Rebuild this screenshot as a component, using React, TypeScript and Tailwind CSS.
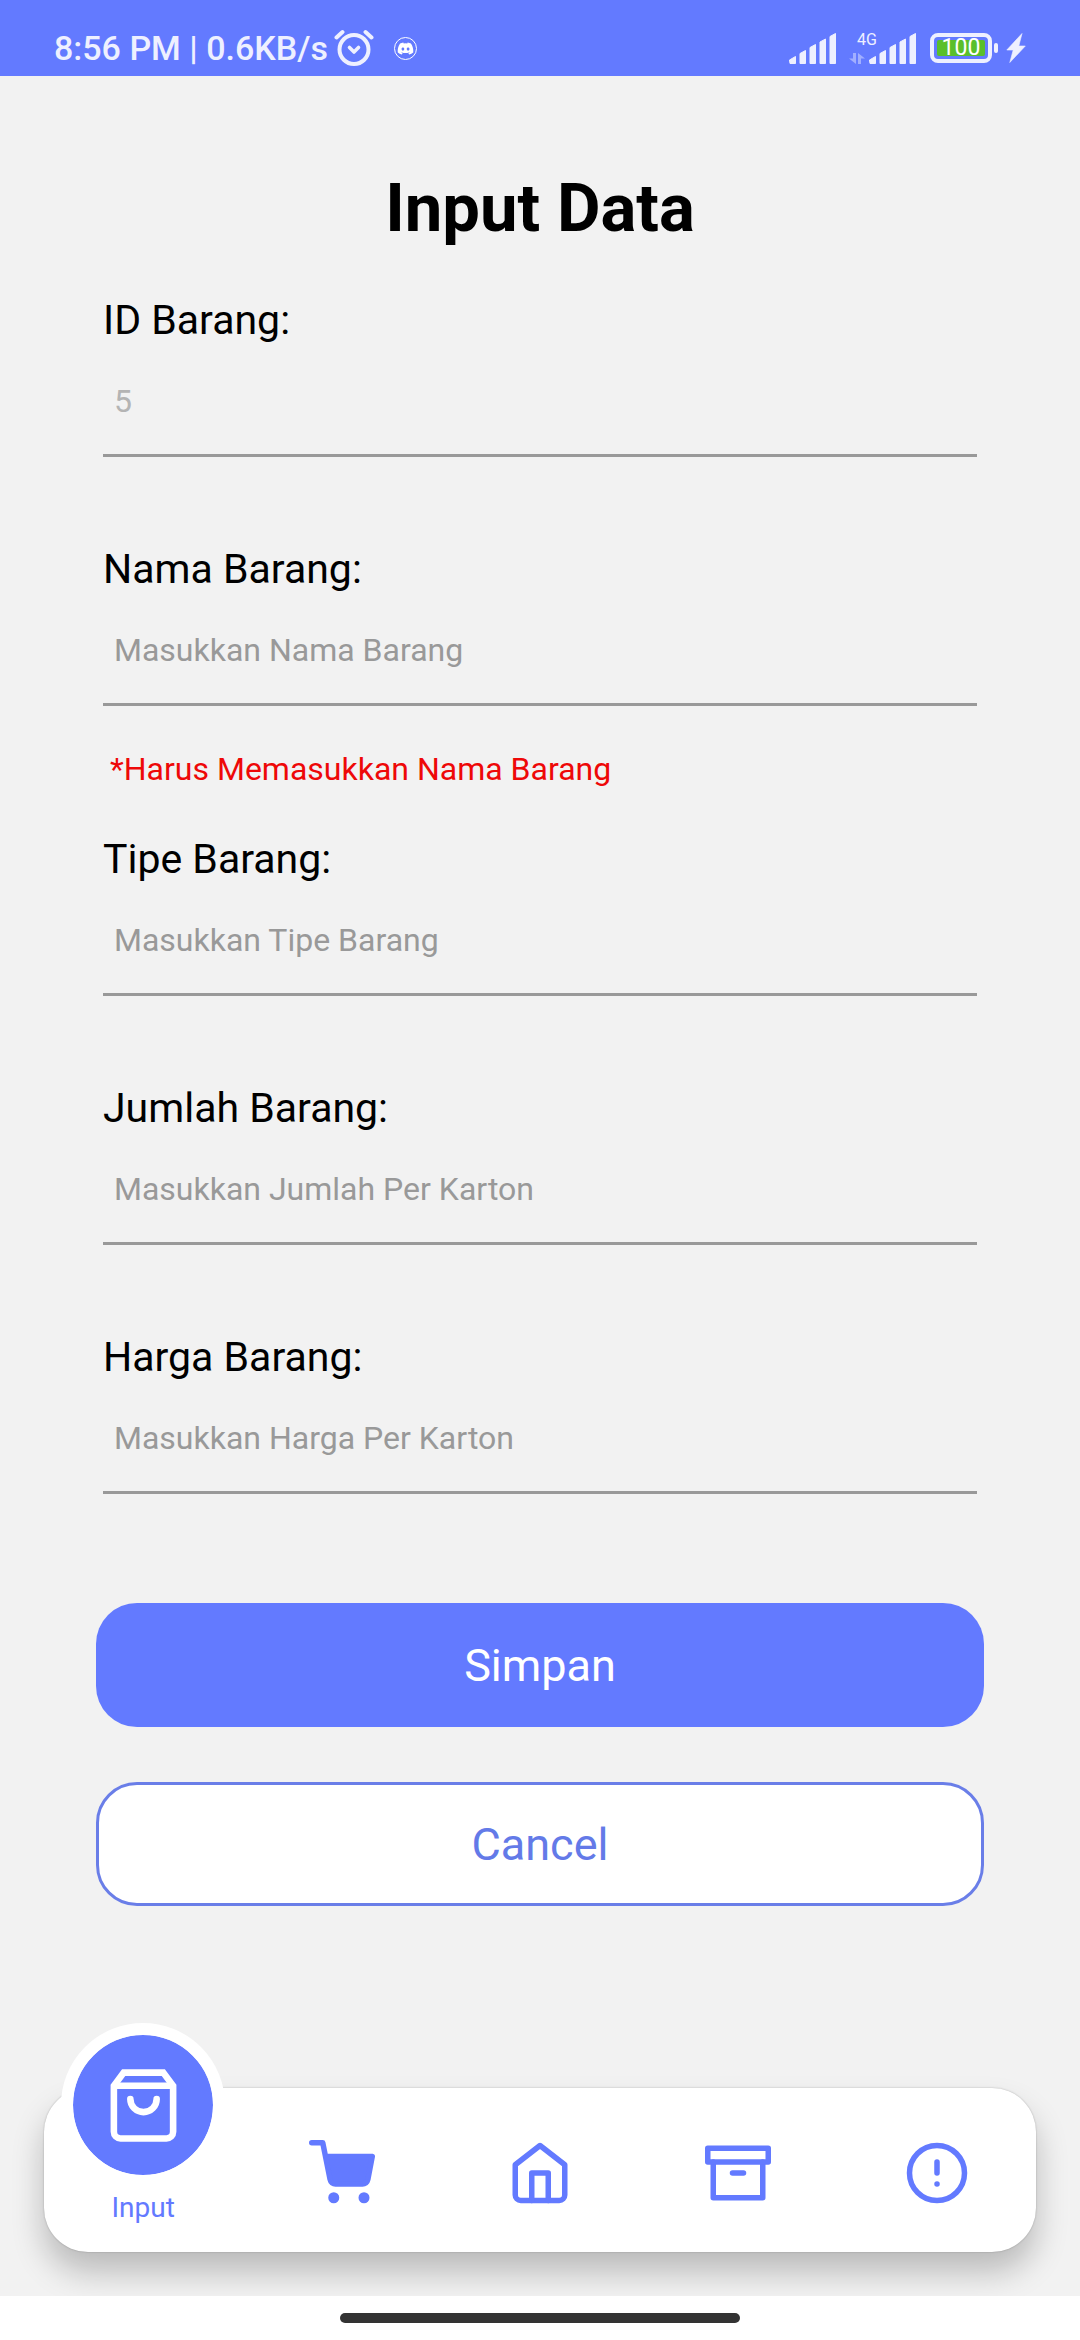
import type { ReactNode } from "react";
import { FaDiscord } from "react-icons/fa";

type FieldProps = {
  id: string;
  label: string;
  placeholder?: string;
  value?: string;
  error?: string;
};

function Field({ id, label, placeholder, value, error }: FieldProps) {
  return (
    <div>
      <label htmlFor={id} className="block text-[41px] leading-[52px] text-black">
        {label}
      </label>
      <input
        id={id}
        type="text"
        placeholder={placeholder}
        defaultValue={value}
        disabled={value !== undefined}
        className="block h-[111px] w-full border-b-3 border-[#999999] bg-transparent px-[11px] pt-[2px] text-[32px] text-black outline-none placeholder:text-[#999999] disabled:text-[#b4b4b4]"
      />
      <div className="px-[7px] py-[43px]">
        {error && (
          <p role="alert" className="text-[32px] leading-[41px] text-[#ee0808]">
            {error}
          </p>
        )}
      </div>
    </div>
  );
}

function AlarmIcon() {
  return (
    <svg width="40" height="38" viewBox="0 0 40 38" fill="none" stroke="currentColor" strokeWidth="4" strokeLinecap="round" strokeLinejoin="round" aria-hidden="true">
      <circle cx="20" cy="20.5" r="14.5" />
      <path d="M15.500 18.500l4.500 4.500 4.500-4.500" strokeWidth="3.6" />
      <path d="M2.500 8.500L8.500 3M37.500 8.500L31.500 3" />
    </svg>
  );
}

function DiscordIcon() {
  return (
    <span className="flex size-[23px] items-center justify-center rounded-full border border-white text-white">
      <FaDiscord size={17} aria-hidden="true" />
    </span>
  );
}

function SignalIcon() {
  return (
    <svg width="48" height="31" viewBox="0 0 48 31" fill="currentColor" stroke="currentColor" strokeWidth="1" strokeLinejoin="round" aria-hidden="true">
      <path d="M.5 27l6-3.500V30.500H1z" />
      <path d="M11 20.500l5.500-3V30.500H11z" />
      <path d="M21 14.500l5.500-3V30.500H21z" />
      <path d="M31 9l5.500-3V30.500H31z" />
      <path d="M41 3.500l5.500-3V30.500H41z" />
    </svg>
  );
}

function DataArrowsIcon() {
  return (
    <svg width="16" height="11" viewBox="0 0 16 11" fill="currentColor" opacity="0.45" aria-hidden="true">
      <path d="M4 0h3v11L0 5.500h4z" />
      <path d="M12 11H9V0L16 5.500h-4z" />
    </svg>
  );
}

function BoltIcon() {
  return (
    <svg width="20" height="30" viewBox="0 0 20 30" fill="currentColor" stroke="currentColor" strokeWidth="0.6" aria-hidden="true">
      <path d="M16 .5L.8 17h6.400L3.800 29.500 19.300 13h-6.500z" />
    </svg>
  );
}

function StatusBar() {
  return (
    <header className="flex h-19 items-center justify-between bg-[#637aff] px-[54px] pt-5 text-[#eef0ff]">
      <div className="flex items-center">
        <span className="text-[34px] leading-10 font-medium whitespace-nowrap">8:56 PM | 0.6KB/s</span>
        <span className="ml-[6px]">
          <AlarmIcon />
        </span>
        <span className="ml-5">
          <DiscordIcon />
        </span>
      </div>
      <div className="flex items-center">
        <SignalIcon />
        <div className="ml-3 flex h-8 flex-col items-start justify-between">
          <span className="pl-2 text-base leading-4">4G</span>
          <DataArrowsIcon />
        </div>
        <span className="-ml-2">
          <SignalIcon />
        </span>
        <span className="ml-[13px] flex h-[30px] w-[62px] items-center rounded-lg border-4 border-current p-[3px]">
          <span className="flex h-4 w-full items-center justify-center rounded-xs bg-[#5abf2b] text-[23px] leading-4 text-white">
            100
          </span>
        </span>
        <span className="ml-[2px] h-[10px] w-1 rounded-sm bg-current" />
        <span className="ml-2">
          <BoltIcon />
        </span>
      </div>
    </header>
  );
}

function NavIcon({ children }: { children: ReactNode }) {
  return (
    <svg width="66" height="66" viewBox="0 0 24 24" fill="none" stroke="currentColor" strokeWidth="2" strokeLinecap="round" strokeLinejoin="round" aria-hidden="true">
      {children}
    </svg>
  );
}

function NavLink({ label, children }: { label: string; children: ReactNode }) {
  return (
    <a href="#" aria-label={label} className="flex items-center justify-center pt-[6px]">
      <NavIcon>{children}</NavIcon>
    </a>
  );
}

function BottomNav() {
  return (
    <nav className="mx-11 mt-auto mb-11 grid h-41 grid-cols-5 rounded-[44px] bg-white text-[#637aff] shadow-[0_20px_32px_rgba(0,0,0,0.23),0_0_2px_rgba(0,0,0,0.25)]">
      <a href="#" aria-current="page" className="-mt-[65px] flex flex-col items-center">
        <span className="flex size-41 items-center justify-center rounded-full border-12 border-white bg-[#637aff] bg-clip-padding text-white">
          <svg width="79" height="79" viewBox="0 0 24 24" fill="none" stroke="currentColor" strokeWidth="2" aria-hidden="true">
            <path d="M6 2L3 6v14a2 2 0 0 0 2 2h14a2 2 0 0 0 2-2V6l-3-4z" />
            <path d="M3 6h18" />
            <path d="M16 10a4 4 0 0 1-8 0" strokeLinecap="round" />
          </svg>
        </span>
        <span className="mt-[5px] text-[28px] leading-8">Input</span>
      </a>
      <NavLink label="Keranjang">
        <circle cx="9" cy="21" r="1" fill="currentColor" />
        <circle cx="20" cy="21" r="1" fill="currentColor" />
        <path d="M6 6l1.680 8.390a2 2 0 0 0 2 1.610h9.720a2 2 0 0 0 2-1.610L23 6z" fill="currentColor" stroke="none" />
        <path d="M1 1h4l2.680 13.390a2 2 0 0 0 2 1.610h9.720a2 2 0 0 0 2-1.610L23 6H6" />
      </NavLink>
      <NavLink label="Beranda">
        <path d="M3 9l9-7 9 7v11a2 2 0 0 1-2 2H5a2 2 0 0 1-2-2z" />
        <path d="M9 22V12h6v10" />
      </NavLink>
      <NavLink label="Arsip">
        <path d="M21 8v13H3V8" />
        <path d="M1 3h22v5H1z" />
        <path d="M10 12h4" />
      </NavLink>
      <NavLink label="Info">
        <circle cx="12" cy="12" r="10" />
        <path d="M12 8v4M12 16h.01" />
      </NavLink>
    </nav>
  );
}

export default function App() {
  return (
    <div className="flex min-h-screen flex-col bg-white font-[Roboto,sans-serif]">
      <StatusBar />
      <main className="flex flex-1 flex-col overflow-hidden bg-[#f2f2f2] pt-[92px]">
        <h1 className="text-center text-[67px] leading-20 font-bold text-black">Input Data</h1>
        <form onSubmit={(event) => event.preventDefault()}>
          <div className="mt-[46px] px-[103px]">
            <Field id="id-barang" label="ID Barang:" value="5" />
            <Field
              id="nama-barang"
              label="Nama Barang:"
              placeholder="Masukkan Nama Barang"
              error="*Harus Memasukkan Nama Barang"
            />
            <Field id="tipe-barang" label="Tipe Barang:" placeholder="Masukkan Tipe Barang" />
            <Field id="jumlah-barang" label="Jumlah Barang:" placeholder="Masukkan Jumlah Per Karton" />
            <Field id="harga-barang" label="Harga Barang:" placeholder="Masukkan Harga Per Karton" />
          </div>
          <div className="mt-[23px] flex flex-col gap-[55px] px-24">
            <button type="submit" className="h-31 rounded-[41px] bg-[#637aff] pt-[2px] text-[45px] text-white">
              Simpan
            </button>
            <button
              type="button"
              className="h-31 rounded-[41px] border-3 border-[#6a7ee8] bg-white pt-[2px] text-[45px] text-[#637ae8]"
            >
              Cancel
            </button>
          </div>
        </form>
        <BottomNav />
      </main>
      <footer className="flex h-11 items-center justify-center bg-white">
        <span className="h-[10px] w-[400px] rounded-full bg-[#333333]" />
      </footer>
    </div>
  );
}
